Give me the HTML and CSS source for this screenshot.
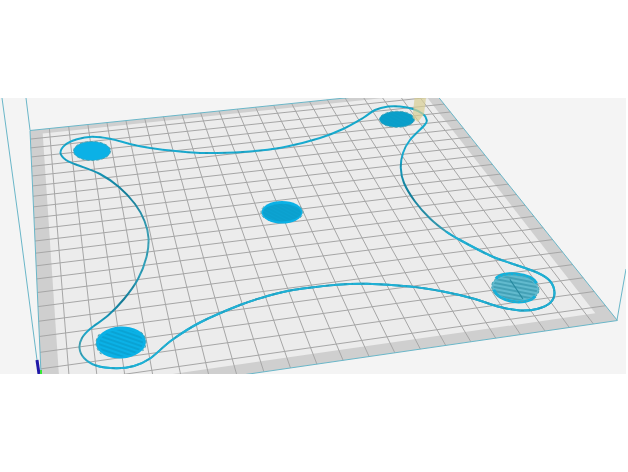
FILE: index.html
```html
<!DOCTYPE html>
<html lang="en">
<head>
<meta charset="utf-8">
<meta name="viewport" content="width=device-width, initial-scale=1">
<title>Build plate preview</title>
<link rel="stylesheet" href="styles.css">
</head>
<body>
<main class="viewer">
<svg class="scene" viewBox="0 98 626 276" role="img" aria-label="Sliced model on the build plate">
  <defs>
    <pattern id="fill-fine" width="3" height="3" patternUnits="userSpaceOnUse" patternTransform="rotate(28)">
      <path class="hatch hatch-soft" d="M0 1H3"/>
    </pattern>
    <pattern id="fill-wide" width="4" height="4" patternUnits="userSpaceOnUse" patternTransform="rotate(22)">
      <path class="hatch" d="M0 1H4"/>
    </pattern>
    <pattern id="fill-open" width="4" height="4" patternUnits="userSpaceOnUse" patternTransform="rotate(5)">
      <path class="hatch hatch-dark" d="M0 1H4"/>
    </pattern>
    <linearGradient id="wall" gradientUnits="userSpaceOnUse" x1="0" y1="105" x2="0" y2="370">
      <stop offset="0" stop-color="#13a9cb"/>
      <stop offset=".17" stop-color="#19acd2"/>
      <stop offset=".33" stop-color="#127f9b"/>
      <stop offset=".5" stop-color="#3fa3b8"/>
      <stop offset=".64" stop-color="#2a9fba"/>
      <stop offset=".74" stop-color="#137c98"/>
      <stop offset=".85" stop-color="#19a9cf"/>
      <stop offset=".91" stop-color="#459fae"/>
      <stop offset="1" stop-color="#16b0da"/>
    </linearGradient>
  </defs>
  <rect class="backdrop" y="98" width="626" height="276"/>
  <path id="plate" class="plate"/>
  <path id="area" class="area"/>
  <path id="grid" class="grid"/>
  <path id="edge" class="edge"/>
  <path class="edge" d="M2 98L20 230L37 360L39 374M26 98L30 130M617 320L626 269"/>
  <path class="axis-z" d="M37 360L39 374"/>
  <path class="axis-y" d="M41 370V374"/>

  <g class="disk">
    <ellipse class="disk-light" cx="92" cy="151" rx="18.5" ry="9.5"/>
    <ellipse class="rim" cx="92" cy="151" rx="18.5" ry="9.5"/>
  </g>
  <g class="disk">
    <ellipse class="disk-deep" cx="397" cy="119.3" rx="17.5" ry="8"/>
    <ellipse fill="url(#fill-fine)" cx="397" cy="119.3" rx="17.5" ry="8"/>
    <ellipse class="rim" cx="397" cy="119.3" rx="17.5" ry="8"/>
  </g>
  <g class="disk">
    <ellipse class="disk-light" cx="282" cy="212.2" rx="20.5" ry="11.3"/>
    <ellipse class="disk-mid" cx="282" cy="212.600" rx="19" ry="8.8"/>
    <ellipse fill="url(#fill-fine)" cx="282" cy="212.600" rx="19" ry="8.8"/>
    <path class="rim" d="M264 206.500C260 210 260 214 264 218M300 206.500C304 210 304 214 300 218"/>
  </g>
  <g class="disk" transform="rotate(-3 121 342.5)">
    <ellipse class="disk-light" cx="121" cy="342.5" rx="25" ry="16"/>
    <ellipse fill="url(#fill-wide)" cx="121" cy="343" rx="22" ry="13.5"/>
    <path class="rim" d="M100 333C95 338 94 347 101 353M141 333C147 338 148 347 142 352"/>
  </g>
  <g class="disk" transform="rotate(6 515.3 288)">
    <ellipse class="disk-open" cx="515.3" cy="288" rx="23.7" ry="13.6"/>
    <ellipse fill="url(#fill-open)" cx="515.3" cy="288" rx="22" ry="12"/>
    <path class="hatch hatch-dark" d="M509 280L524 298"/>
    <path class="disk-wall" d="M495 281C500 272 529 271 536 281M494 292C500 304 528 305 536 294"/>
    <ellipse class="rim" cx="515.3" cy="288" rx="23.7" ry="13.6"/>
  </g>
  <path id="outline" class="outline"/>
  <path id="outline-front" class="outline outline-front"/>
  <path id="outline-grain" class="outline-grain"/>
  <path class="nozzle" d="M414.500 98H426L424 114L418 122L412.500 118Z"/>
</svg>
</main>
<script src="plate.js"></script>
</body>
</html>
```
FILE: styles.css
```css
body {
  margin: 0;
  background: #fff;
}

.viewer {
  display: flex;
  align-items: center;
  min-height: 100vh;
  padding-right: 2px;
}

.scene {
  display: block;
  flex: 1;
  min-width: 0;
}

.scene path {
  fill: none;
}

.backdrop {
  fill: #f4f4f4;
}

.scene .plate {
  fill: #cfcfcf;
}

.scene .area {
  fill: #ececec;
}

.grid {
  stroke: #a6a6a6;
  stroke-width: 1;
}

.edge {
  stroke: #6ab6c8;
  stroke-width: 1;
}

.axis-z {
  stroke: #2018a8;
  stroke-width: 3;
}

.axis-y {
  stroke: #35e835;
  stroke-width: 2;
}

.outline {
  stroke: url(#wall);
  stroke-width: 2;
  stroke-linejoin: round;
}

.outline-front {
  stroke: #1fb1d6;
}

.outline-grain {
  stroke: #28717f;
  stroke-width: 1;
  stroke-dasharray: 3 5 1 9;
  opacity: .4;
}

.disk-light {
  fill: #0bb1e6;
}

.disk-mid {
  fill: #0ca3d2;
}

.disk-deep {
  fill: #0aa0cb;
}

.disk-open {
  fill: #62bace;
}

.disk-wall {
  stroke: #10b1dc;
  stroke-width: 3;
}

.rim {
  fill: none;
  stroke: #4aa3b3;
  stroke-width: 1;
  stroke-dasharray: 3 2;
}

.hatch {
  stroke: #0795c2;
  stroke-width: 1;
}

.hatch-soft {
  opacity: .5;
}

.hatch-dark {
  stroke: #26889f;
}

.scene .nozzle {
  fill: #d9cf94;
  opacity: .7;
}
```
FILE: plate.js
```js
// Build plate of 22 x 22 cells, seen in perspective.
const CELLS = 22;
const corners = [[30, 130.5], [432, 89], [617.4, 320.5], [42.4, 404]];

// Projective map from the unit square to the four plate corners.
const [[x0, y0], [x1, y1], [x2, y2], [x3, y3]] = corners;
const dx1 = x1 - x2, dx2 = x3 - x2, sx = x0 - x1 + x2 - x3;
const dy1 = y1 - y2, dy2 = y3 - y2, sy = y0 - y1 + y2 - y3;
const det = dx1 * dy2 - dx2 * dy1;
const g = (sx * dy2 - dx2 * sy) / det;
const h = (dx1 * sy - sx * dy1) / det;

function project(col, row) {
  const u = col / CELLS, v = row / CELLS;
  const w = g * u + h * v + 1;
  const x = ((x1 - x0 + g * x1) * u + (x3 - x0 + h * x3) * v + x0) / w;
  const y = ((y1 - y0 + g * y1) * u + (y3 - y0 + h * y3) * v + y0) / w;
  return x.toFixed(2) + " " + y.toFixed(2);
}

function quad(left, top, right, bottom) {
  return "M" + [[left, top], [right, top], [right, bottom], [left, bottom]]
    .map(([c, r]) => project(c, r)).join("L") + "Z";
}

function draw(id, d) {
  document.getElementById(id).setAttribute("d", d);
}

let lines = "";
for (let i = 1; i < CELLS; i++) {
  lines += "M" + project(i, 0) + "L" + project(i, CELLS);
  lines += "M" + project(0, i) + "L" + project(CELLS, i);
}
draw("plate", quad(0, 0, CELLS, CELLS));
draw("edge", quad(0, 0, CELLS, CELLS));
draw("area", quad(0.64, 0.5, CELLS - 0.62, CELLS - 0.62));
draw("grid", lines);

// Printed outline, as a smooth closed curve through its points.
const points = [
  [60.5, 153], [66, 160], [76, 164.500], [100, 174], [119, 187], [135, 204],
  [144.500, 221], [148.500, 238], [146.500, 257], [138, 279], [124, 299], [108, 315.500],
  [90, 329], [82, 338], [79.500, 348], [84, 358], [96, 365.500], [116, 368.300],
  [134, 366], [150, 358.500], [172, 340], [200, 322.500], [240, 305], [266, 296.500],
  [293, 290], [337, 284.700], [367, 283.700], [410, 286.500], [443, 291.500],
  [473, 298.500], [500, 307], [520, 310.500], [537, 309], [550, 303], [554.500, 293],
  [550, 281], [537, 272.500], [513, 264], [490, 255.500], [460, 240], [446, 231.500],
  [430, 218.500], [415, 201.500], [404, 183], [400.800, 168], [403, 153], [410, 140],
  [425, 124.500], [426.500, 119.500], [423, 114], [413, 109], [400, 106.500], [388, 106.500],
  [375, 110], [363, 118], [343, 129], [320, 138], [287, 146.500], [260, 150.500],
  [227, 152.700], [200, 153], [180, 151.500], [150, 148], [130, 144], [110, 138.700],
  [92, 136.700], [77, 139.200], [65, 145]
];

function smooth(from, to) {
  const n = points.length;
  let d = "M" + points[from].join(" ");
  for (let i = from; i < to; i++) {
    const [p, q, r, s] = [i - 1, i, i + 1, i + 2].map(k => points[(k + n) % n]);
    d += "C" + [
      q[0] + (r[0] - p[0]) / 6, q[1] + (r[1] - p[1]) / 6,
      r[0] - (s[0] - q[0]) / 6, r[1] - (s[1] - q[1]) / 6, r[0], r[1]
    ].map(k => k.toFixed(2)).join(" ");
  }
  return d;
}

draw("outline", smooth(0, points.length));
draw("outline-front", smooth(16, 40));
draw("outline-grain", smooth(0, points.length));
```
